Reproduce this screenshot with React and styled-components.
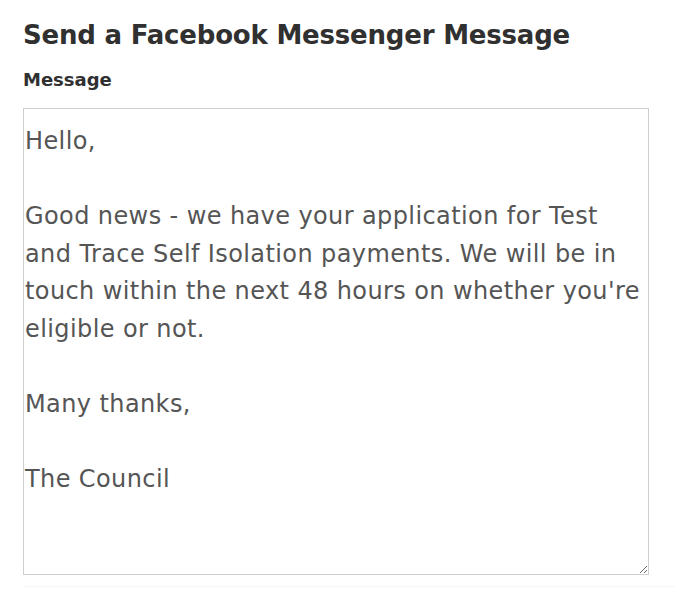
import React from 'react';
import styled, { createGlobalStyle } from 'styled-components';

const GlobalStyle = createGlobalStyle`
  html, body {
    margin: 0;
    padding: 0;
    background: #ffffff;
  }
`;

const Panel = styled.div`
  padding: 16px 40px 0 23px;
  font-family: "DejaVu Sans", Inter, sans-serif;
`;

const Title = styled.h2`
  margin: 0;
  font-size: 26px;
  line-height: 38px;
  font-weight: 700;
  color: #303030;
  letter-spacing: -0.2px;
`;

const Label = styled.label`
  display: block;
  margin: 13px 0 15px;
  font-size: 18px;
  line-height: 26px;
  font-weight: 700;
  color: #303030;
`;

const MessageBox = styled.textarea`
  display: block;
  box-sizing: border-box;
  width: 626px;
  height: 467px;
  margin: 0;
  padding: 14px 1px 0 1px;
  border: 1px solid #cfcfcf;
  border-radius: 0;
  font-family: inherit;
  font-size: 24px;
  line-height: 37.5px;
  letter-spacing: 0.4px;
  color: #555555;
  background: #fff;
  resize: vertical;
  outline: none;
`;

const Divider = styled.div`
  margin-top: 11px;
  width: 652px;
  height: 1px;
  background: #f6f6f6;
`;

const message = `Hello,

Good news - we have your application for Test and Trace Self Isolation payments. We will be in touch within the next 48 hours on whether you're eligible or not.

Many thanks,

The Council`;

export default function App() {
  return (
    <>
      <GlobalStyle />
      <Panel>
        <Title>Send a Facebook Messenger Message</Title>
        <Label htmlFor="fb-message">Message</Label>
        <MessageBox id="fb-message" defaultValue={message} spellCheck={false} />
        <Divider />
      </Panel>
    </>
  );
}
